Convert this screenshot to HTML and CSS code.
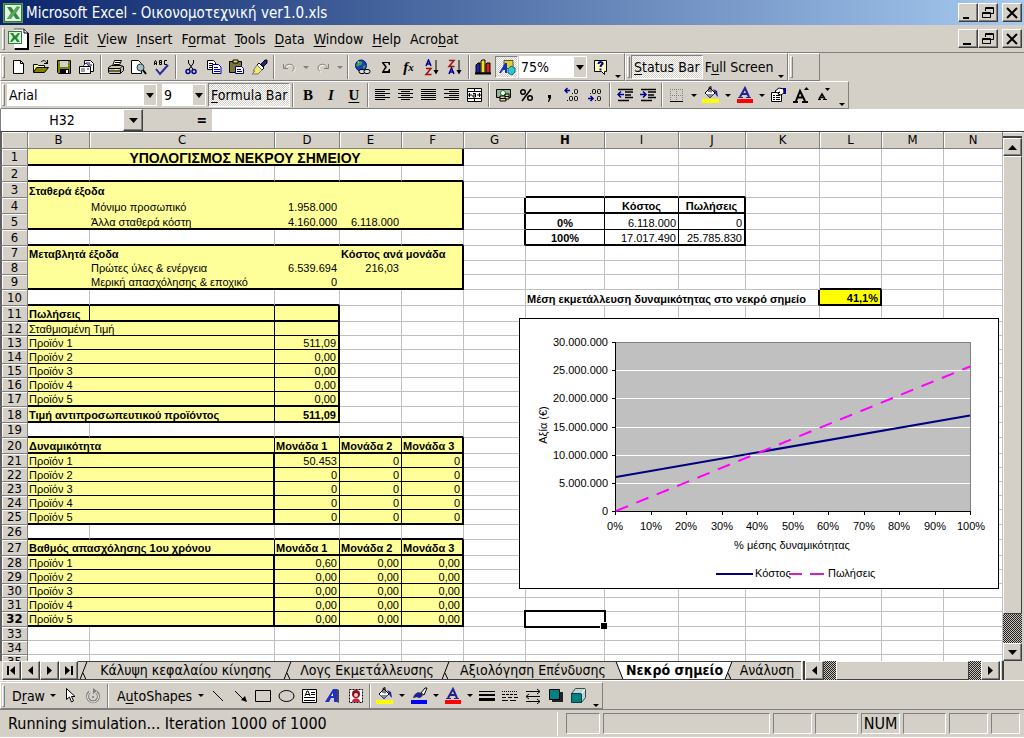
FILE: index.html
```html
<!DOCTYPE html>
<html lang="el">
<head>
<meta charset="utf-8">
<title>Microsoft Excel - Οικονομοτεχνική ver1.0.xls</title>
<link rel="stylesheet" href="styles.css">
</head>
<body>
<header class="titlebar">
  <svg class="app-icon" width="20" height="20" viewBox="0 0 20 20"><rect width="20" height="20" fill="#5a9a5a"/><rect x="1" y="1" width="18" height="18" fill="#2f7d3a"/><rect x="2" y="2" width="16" height="16" fill="#e4f2e0"/><path d="M4 4h4l3 4 3-4h3l-4 6 4 6h-4l-3-4-3 4H4l4-6z" fill="#2f8a3c"/><path d="M14 3l3 1-9 12H4z" fill="#56a860"/></svg>
  <h1>Microsoft Excel - Οικονομοτεχνική ver1.0.xls</h1>
  <div class="winbtns">
    <button aria-label="Minimize"><svg width="14" height="14"><path d="M2 11h6v2H2z"/></svg></button>
    <button aria-label="Restore"><svg width="14" height="14" fill="none" stroke="#000"><path d="M4.500 5V1.500h8v6H10M4 2.500h9M1.500 6.500h8v5h-8zM1 7.500h9"/></svg></button>
    <button class="close" aria-label="Close"><svg width="14" height="14"><path d="M2 2l10 10M12 2L2 12" stroke="#000" stroke-width="2"/></svg></button>
  </div>
</header>

<nav class="menubar">
  <span class="grip"></span>
  <svg class="doc-icon" width="22" height="22" viewBox="0 0 22 22"><path d="M7 1h10l4 4v16H7z" fill="#fff"/><path d="M7 1h10l4 4v16H7" fill="none" stroke="#555"/><path d="M17 1v4h4" fill="none" stroke="#000"/><path d="M21 5v16H8" fill="none" stroke="#000" stroke-width="2"/><rect x="1" y="3" width="14" height="13" fill="#2f7d3a"/><rect x="2" y="4" width="12" height="11" fill="#dff0da"/><path d="M3 5h3l2 3 3-3h2l-3 5 3 4h-3l-2-3-3 3H3l3-5z" fill="#1f8a34"/></svg>
  <button><u>F</u>ile</button><button><u>E</u>dit</button><button><u>V</u>iew</button><button><u>I</u>nsert</button><button>F<u>o</u>rmat</button><button><u>T</u>ools</button><button><u>D</u>ata</button><button><u>W</u>indow</button><button><u>H</u>elp</button><button>Acro<u>b</u>at</button>
  <div class="winbtns">
    <button aria-label="Minimize workbook"><svg width="14" height="14"><path d="M2 11h8v2H2z"/></svg></button>
    <button aria-label="Restore workbook"><svg width="14" height="14" fill="none" stroke="#000"><path d="M4.500 5V1.500h8v6H10M4 2.500h9M1.500 6.500h8v5h-8zM1 7.500h9"/></svg></button>
    <button class="close" aria-label="Close workbook"><svg width="14" height="14"><path d="M2 2l10 10M12 2L2 12" stroke="#000" stroke-width="2"/></svg></button>
  </div>
</nav>

<div class="dock">
  <div class="toolbar" role="toolbar" aria-label="Standard">
    <span class="grip"></span>
    <button class="ic" aria-label="New"><svg width="16" height="16"><path d="M3.500 1.500h7l3 3v10h-10z" fill="#fff" stroke="#000"/><path d="M10.500 1.500v3h3" fill="none" stroke="#000"/></svg></button>
    <button class="ic" aria-label="Open"><svg width="18" height="16"><path d="M1.500 13.500v-8h4l1 1h6v2" fill="#ffff80" stroke="#000"/><path d="M1.500 13.500l3-5h12l-4 5z" fill="#808000" stroke="#000"/><path d="M9 3c2-2 4-2 6 1M15.500 1v4M12 4.500h4" fill="none" stroke="#000"/></svg></button>
    <button class="ic" aria-label="Save"><svg width="16" height="16"><path d="M1.500 1.500h13v13h-12l-1-1z" fill="#808000" stroke="#000"/><path d="M4 2h8v6H4z" fill="#d4d0c8"/><path d="M4 10h9v4H4z"/><path d="M10 11h2v3h-2z" fill="#fff"/></svg></button>
    <button class="ic" aria-label="E-mail"><svg width="17" height="16"><path d="M6.500 6V1.500h6l3 3v8h-3" fill="#fff" stroke="#000"/><path d="M8 4h4M8 6h6" stroke="#000080"/><path d="M4 8l4-4 4 4z" fill="#eee" stroke="#444"/><path d="M1.500 7.500h11v7h-11z" fill="#fff" stroke="#000"/><path d="M3 10h4M3 12h4M9 10h2" stroke="#444"/></svg></button>
    <i class="sep"></i>
    <button class="ic" aria-label="Print"><svg width="17" height="16"><path d="M5.500 7l2-5.500h7L12 7" fill="#fff" stroke="#000"/><path d="M8 3.500h5M7 5.500h5" stroke="#000"/><path d="M1.500 8.500l3-2h10l2 1v4l-3 3h-11l-1-1z" fill="#c8c8a8" stroke="#000"/><path d="M1 9.500h12M2 12h11M13.500 9l2-2M13.500 14V9.500" stroke="#000" fill="none"/><path d="M8 10h3v1H8z" fill="#ff0"/></svg></button>
    <button class="ic" aria-label="Print Preview"><svg width="17" height="16"><path d="M1.500 1.500h7l3 3v10h-10z" fill="#fff" stroke="#000"/><circle cx="10.500" cy="8.500" r="3.500" fill="#9cc4c8" stroke="#333"/><path d="M13 11l3 4" stroke="#000" stroke-width="2"/></svg></button>
    <button class="ic" aria-label="Spelling"><svg width="17" height="17"><path d="M1.500 6V3l1-1.500 1 1.500v3M1.500 4.500h2M6.500 1.500v4h2v-4zM6.500 3.500h2M14 1.500h-2.500v4H14" fill="none" stroke="#000"/><path d="M3 10l4 5 8-9" fill="none" stroke="#2a2a9c" stroke-width="2"/></svg></button>
    <i class="sep"></i>
    <button class="ic" aria-label="Cut"><svg width="16" height="16" fill="none"><path d="M5.500 1v3l5 7M10.500 1v3l-5 7" stroke="#000"/><circle cx="5" cy="12.500" r="2" stroke="#000090" stroke-width="1.500"/><circle cx="11" cy="12.500" r="2" stroke="#000090" stroke-width="1.500"/></svg></button>
    <button class="ic" aria-label="Copy"><svg width="16" height="16"><path d="M1.500 1.500h6l2 2v7h-8z" fill="#fff" stroke="#000"/><path d="M3 4.500h4M3 6.500h5M3 8.500h3" stroke="#000"/><path d="M6.500 5.500h6l2.500 2.500v6.500H6.500z" fill="#fff" stroke="#000090"/><path d="M8 8.500h4M8 10.500h6M8 12.500h6" stroke="#000090"/></svg></button>
    <button class="ic" aria-label="Paste"><svg width="17" height="16"><path d="M1.500 2.500h12v11h-12z" fill="#77773c" stroke="#000"/><path d="M5 1h5v3H5z" fill="#e8e060" stroke="#000"/><path d="M7.500 7.500h6l2 2v5h-8z" fill="#fff" stroke="#000090"/><path d="M9 10.500h4M9 12.500h5" stroke="#000090"/></svg></button>
    <button class="ic" aria-label="Format Painter"><svg width="18" height="16"><path d="M10 5l4-4 2 0 0 3-4 4z" fill="#22228c" stroke="#000"/><path d="M8 4l5 5-2 2-5-5z" fill="#fff" stroke="#000"/><path d="M6 6l5 5-4 4H1l3-3H2z" fill="#f0e868" stroke="#777"/></svg></button>
    <i class="sep"></i>
    <button class="ic" aria-label="Undo"><svg width="16" height="16" fill="none"><path d="M4 9c0-5 9-5 9 0 0 2-1 3-2 3" stroke="#fff" transform="translate(1 1)"/><path d="M4 9c0-5 9-5 9 0 0 2-1 3-2 3M2.500 5v4.500H7" stroke="#808080"/></svg></button>
    <button class="dd off" aria-label="Undo list"></button>
    <button class="ic" aria-label="Redo"><svg width="16" height="16" fill="none"><path d="M12 9C12 4 3 4 3 9c0 2 1 3 2 3" stroke="#fff" transform="translate(1 1)"/><path d="M12 9C12 4 3 4 3 9c0 2 1 3 2 3M13.500 5v4.500H9" stroke="#808080"/></svg></button>
    <button class="dd off" aria-label="Redo list"></button>
    <i class="sep"></i>
    <button class="ic" aria-label="Insert Hyperlink"><svg width="17" height="17"><circle cx="7" cy="6.500" r="5.500" fill="#1c3cc0" stroke="#001060"/><path d="M4 3c3-2 5 0 4 2S4 6 4 8L2 6zM9 7l3-1-1 3-2 1z" fill="#2fa84a"/><path d="M3 3l2-1v2z" fill="#9fe0ff"/><rect x="5" y="10.500" width="6" height="4" rx="2" fill="#ddd" stroke="#000"/><rect x="10" y="10.500" width="6" height="4" rx="2" fill="#ddd" stroke="#000"/></svg></button>
    <button class="ic" aria-label="AutoSum"><svg width="16" height="16"><path d="M4 3h8v3h-1l-1-2H6l3 4-3 4h4l1-2h1v4H4v-1l3-5-3-4z"/></svg></button>
    <button class="ic fx" aria-label="Paste Function"><i>f</i><small>x</small></button>
    <button class="ic" aria-label="Sort Ascending"><svg width="16" height="17" fill="none"><path d="M2 7l2.500-6L7 7M3 5h3" stroke="#000090" stroke-width="1.500"/><path d="M2 9.500h5L2 15.500h5.500" stroke="#a01010" stroke-width="1.500"/><path d="M12 1v12" stroke="#000"/><path d="M9.500 11h5L12 15.500z" fill="#000"/></svg></button>
    <button class="ic" aria-label="Sort Descending"><svg width="16" height="17" fill="none"><path d="M2 15l2.500-6L7 15M3 13h3" stroke="#000090" stroke-width="1.500"/><path d="M2 1.500h5L2 7.500h5.500" stroke="#a01010" stroke-width="1.500"/><path d="M12 1v12" stroke="#000"/><path d="M9.500 11h5L12 15.500z" fill="#000"/></svg></button>
    <i class="sep"></i>
    <button class="ic" aria-label="Chart Wizard"><svg width="17" height="16"><path d="M1 6l2-2h2v10H1z" fill="#2020b0" stroke="#000"/><path d="M6 2l1-1h3v13H6z" fill="#f4e020" stroke="#000"/><path d="M11 5l1-1h3v10h-4z" fill="#e02020" stroke="#000"/><path d="M0 14.500h16" stroke="#000" stroke-width="2"/></svg></button>
    <button class="ic on" aria-label="Drawing"><svg width="18" height="18"><path d="M6 2.500h9v8H6z" fill="#e8d020" stroke="#555"/><path d="M1 15L7 5h2v10H7v-3H5l-2 3z" fill="#1030c0"/><path d="M10 11l3-3 4 2v4l-3 3-4-2z" fill="#30c8d0" stroke="#0a7080"/></svg></button>
    <label class="combo zoom"><select aria-label="Zoom"><option>75%</option></select><span></span></label>
    <button class="ic" aria-label="Help"><svg width="16" height="17"><path d="M1.500 1.500h12v11h-2v3l-3-3h-7z" fill="#ffffb0" stroke="#000"/><path d="M5.500 5c0-3 5-2 4 0-1 1-2 1-2 3M7.500 9.500v2" fill="none" stroke="#0000a0" stroke-width="2"/></svg></button>
    <button class="dd more" aria-label="More Buttons"></button>
  </div>
  <div class="toolbar" role="toolbar" aria-label="View">
    <span class="grip"></span>
    <button class="tx on"><u>S</u>tatus Bar</button><button class="tx">F<u>u</u>ll Screen</button>
    <button class="dd more" aria-label="More view buttons"></button>
  </div>
  <div class="toolbar stub"><span class="grip"></span></div>
</div>

<div class="dock">
  <div class="toolbar" role="toolbar" aria-label="Formatting">
    <span class="grip"></span>
    <label class="combo font"><select aria-label="Font"><option>Arial</option></select><span></span></label>
    <label class="combo size"><select aria-label="Font Size"><option>9</option></select><span></span></label>
    <button class="tx on"><u>F</u>ormula Bar</button>
    <i class="sep"></i>
    <button class="ic ser" aria-label="Bold"><b>B</b></button>
    <button class="ic ser" aria-label="Italic"><b><i>I</i></b></button>
    <button class="ic ser" aria-label="Underline"><b><u>U</u></b></button>
    <i class="sep"></i>
    <button class="ic" aria-label="Align Left"><svg width="15" height="14" stroke="#000"><path d="M0 1.500h15M0 3.500h10M0 5.500h15M0 7.500h10M0 9.500h15M0 11.500h10"/></svg></button>
    <button class="ic" aria-label="Center"><svg width="15" height="14" stroke="#000"><path d="M0 1.500h15M3 3.500h9M0 5.500h15M3 7.500h9M0 9.500h15M3 11.500h9"/></svg></button>
    <button class="ic" aria-label="Justify"><svg width="15" height="14" stroke="#000"><path d="M0 1.500h15M0 3.500h15M0 5.500h15M0 7.500h15M0 9.500h15M0 11.500h15"/></svg></button>
    <button class="ic" aria-label="Align Right"><svg width="15" height="14" stroke="#000"><path d="M0 1.500h15M5 3.500h10M0 5.500h15M5 7.500h10M0 9.500h15M5 11.500h10"/></svg></button>
    <button class="ic" aria-label="Merge and Center"><svg width="17" height="16"><path d="M1.500 1.500h14v13h-14zM1 4.500h15M1 11.500h15M8.500 1v3M8.500 12v3" fill="#fff" stroke="#000"/><path d="M2 8h4M3.500 6v4M11 8h4M13.500 6v4M7 6.500h2.500v3.500H7V8h2" stroke="#000" fill="none"/></svg></button>
    <i class="sep"></i>
    <button class="ic" aria-label="Currency Style"><svg width="17" height="16"><path d="M1.500 2.500h14v8h-14z" fill="#90b890" stroke="#000"/><circle cx="8" cy="6" r="2.500" fill="#fff" stroke="#274"/><path d="M5 9h6v5H5z" fill="#e0d890" stroke="#000"/><path d="M10 7h4v5h-4z" fill="#e0d890" stroke="#000"/><path d="M5 11.500h6M10 9.500h4" stroke="#000"/></svg></button>
    <button class="ic" aria-label="Percent Style"><svg width="15" height="14" fill="none" stroke="#000" stroke-width="1.500"><circle cx="4" cy="4" r="2.300"/><circle cx="11" cy="10" r="2.300"/><path d="M12 1L3 13"/></svg></button>
    <button class="ic" aria-label="Comma Style"><svg width="10" height="16"><path d="M3 8h3v3l-2 4H3l1-4H3z"/></svg></button>
    <button class="ic dec" aria-label="Increase Decimal"><svg width="17" height="16"><path d="M1 3.500h5M3.500 1L1 3.500 3.500 6" stroke="#000090" fill="none" stroke-width="1.500"/><path d="M8 6h1v1H8zM3 13h1v1H3z"/><g fill="none" stroke="#000"><rect x="10.500" y="2.500" width="3" height="4" rx="1"/><rect x="5.500" y="9.500" width="3" height="4" rx="1"/><rect x="10.500" y="9.500" width="3" height="4" rx="1"/></g></svg></button>
    <button class="ic dec" aria-label="Decrease Decimal"><svg width="17" height="16"><path d="M1 11.500h5M3.500 9L6 11.500 3.500 14" stroke="#000090" fill="none" stroke-width="1.500"/><path d="M8 13h1v1H8zM3 6h1v1H3z"/><g fill="none" stroke="#000"><rect x="10.500" y="2.500" width="3" height="4" rx="1"/><rect x="5.500" y="2.500" width="3" height="4" rx="1"/><rect x="10.500" y="9.500" width="3" height="4" rx="1"/></g></svg></button>
    <i class="sep"></i>
    <button class="ic" aria-label="Decrease Indent"><svg width="16" height="15"><path d="M1 1.500h15M8 4h8M8 7h6M8 9.500h8M1 12.500h11" stroke="#000" stroke-width="1.500"/><path d="M1 6.500h6M4 3.500l-3 3 3 3" stroke="#000090" fill="none" stroke-width="1.500"/></svg></button>
    <button class="ic" aria-label="Increase Indent"><svg width="16" height="15"><path d="M1 1.500h15M8 4h8M8 7h6M8 9.500h8M1 12.500h11" stroke="#000" stroke-width="1.500"/><path d="M0 6.500h6M3 3.500l3 3-3 3" stroke="#000090" fill="none" stroke-width="1.500"/></svg></button>
    <i class="sep"></i>
    <button class="ic" aria-label="Borders"><svg width="15" height="15"><path d="M1 1.500h13M1 7.500h13M1.500 1v12M7.500 1v12M13.500 1v12" stroke="#808080" stroke-dasharray="1 1"/><path d="M1 13.500h13" stroke="#000"/></svg></button>
    <button class="dd" aria-label="Borders list"></button>
    <button class="ic" aria-label="Fill Color"><svg width="18" height="18"><path d="M3 7l5-5 5 5-5 5z" fill="#fff" stroke="#000"/><path d="M7 6V1.500l2-1v6" fill="none" stroke="#000"/><path d="M11 3l4 2 1 6-2-2-1-2z" fill="#22228c"/><path d="M4 8h8l-4 4z" fill="#88a"/><path d="M0 13h17v4H0z" fill="#ff0"/></svg></button>
    <button class="dd" aria-label="Fill colors"></button>
    <button class="ic" aria-label="Font Color"><svg width="18" height="18"><path d="M4 11L9 2l4 9M6 8h5" fill="none" stroke="#22228c" stroke-width="2"/><path d="M2 11.500h5M10 11.500h5" stroke="#22228c"/><path d="M1 13h16v4H1z" fill="#f00"/></svg></button>
    <button class="dd" aria-label="Font colors"></button>
    <button class="ic" aria-label="Format Cells"><svg width="17" height="16"><path d="M1.500 5.500h10v9h-10z" fill="#fff" stroke="#000"/><path d="M3 8.500h2M6 8.500h4M3 10.500h2M6 10.500h4M3 12.500h2M6 12.500h4" stroke="#000"/><path d="M5 4l4-3 5 1v4l-3 2-3-1 2-2-3 1z" fill="#fff" stroke="#000"/><path d="M13 1h3v6h-2z" fill="#000090"/></svg></button>
    <button class="ic" aria-label="Increase Font Size"><svg width="17" height="17"><path d="M3 14L7 4l5 10M5 10.500h6" fill="none" stroke="#000" stroke-width="2"/><path d="M0 15h5M9 15h6" stroke="#000" stroke-width="2"/><path d="M11 3h5l-2.500-3z"/></svg></button>
    <button class="ic" aria-label="Decrease Font Size"><svg width="17" height="17"><path d="M3 12l3-5 3 5M4 10.500h4" fill="none" stroke="#000" stroke-width="1.500"/><path d="M2 12.500h3M7 12.500h4" stroke="#000"/><path d="M9 1h5l-2.500 3z"/></svg></button>
    <button class="dd more" aria-label="More Buttons"></button>
  </div>
</div>

<div class="formulabar">
  <input class="namebox" aria-label="Name Box" value="H32">
  <button class="raised" aria-label="Names"><svg width="9" height="5"><path d="M0 0h9L4.500 5z"/></svg></button>
  <button class="eq" aria-label="Edit Formula">=</button>
  <input class="formula" aria-label="Formula">
</div>

<main class="workbook">
 <div class="sheet">
  <table>
   <colgroup><col class="w28"><col class="w62"><col class="w185"><col class="w65"><col class="w62"><col class="w62"><col class="w62"><col class="w79"><col class="w74"><col class="w67"><col class="w74"><col class="w62"><col class="w62"><col></colgroup>
   <thead><tr><th></th><th>B</th><th>C</th><th>D</th><th>E</th><th>F</th><th>G</th><th class="cur">H</th><th>I</th><th>J</th><th>K</th><th>L</th><th>M</th><th>N</th></tr></thead>
   <tbody>
    <tr class="h17"><th>1</th><td colspan="5" class="title">ΥΠΟΛΟΓΙΣΜΟΣ ΝΕΚΡΟΥ ΣΗΜΕΙΟΥ</td><td><td><td><td><td><td><td><td></tr>
    <tr class="h16 pre5"><th>2</th><td><td><td><td><td><td><td><td><td><td><td><td><td></tr>
    <tr class="h16 box sum-top"><th>3</th><td><b>Σταθερά έξοδα</b><td><td><td><td><td><td><td><td><td><td><td><td></tr>
    <tr class="h16 box sum sum-end"><th>4</th><td><td>Μόνιμο προσωπικό<td class="n">1.958.000<td><td><td><td><td class="c"><b>Κόστος</b><td class="c"><b>Πωλήσεις</b><td><td><td><td></tr>
    <tr class="h16 box end sum"><th>5</th><td><td>Άλλα σταθερά κόστη<td class="n">4.160.000<td class="n">6.118.000<td><td><td class="c"><b>0%</b><td class="n">6.118.000<td class="n">0<td><td><td><td></tr>
    <tr class="h16 pre5 sum sum-end"><th>6</th><td><td><td><td><td><td><td class="c"><b>100%</b><td class="n">17.017.490<td class="n">25.785.830<td><td><td><td></tr>
    <tr class="h15 box"><th>7</th><td><b>Μεταβλητά έξοδα</b><td><td><td><b>Κόστος ανά μονάδα</b><td><td><td><td><td><td><td><td><td></tr>
    <tr class="h14 box"><th>8</th><td><td>Πρώτες ύλες &amp; ενέργεια<td class="n">6.539.694<td class="n">216,03<td><td><td><td><td><td><td><td><td></tr>
    <tr class="h15 box end"><th>9</th><td><td>Μερική απασχόλησης &amp; εποχικό<td class="n">0<td><td><td><td><td><td><td><td class="kb"><td><td></tr>
    <tr class="h16 pre3"><th>10</th><td><td><td><td><td><td><td colspan="4" class="kr"><b>Μέση εκμετάλλευση δυναμικότητας στο νεκρό σημείο</b><td class="n result"><b>41,1%</b><td><td></tr>
    <tr class="h16 g3 split thick"><th>11</th><td><b>Πωλήσεις</b><td><td><td><td><td><td><td><td><td><td><td><td></tr>
    <tr class="h14 g3"><th>12</th><td>Σταθμισμένη Τιμή<td><td><td><td><td><td><td><td><td><td><td><td></tr>
    <tr class="h14 g3"><th>13</th><td>Προϊόν 1<td><td class="n">511,09<td><td><td><td><td><td><td><td><td><td></tr>
    <tr class="h14 g3"><th>14</th><td>Προϊόν 2<td><td class="n">0,00<td><td><td><td><td><td><td><td><td><td></tr>
    <tr class="h14 g3"><th>15</th><td>Προϊόν 3<td><td class="n">0,00<td><td><td><td><td><td><td><td><td><td></tr>
    <tr class="h14 g3"><th>16</th><td>Προϊόν 4<td><td class="n">0,00<td><td><td><td><td><td><td><td><td><td></tr>
    <tr class="h15 g3 thick"><th>17</th><td>Προϊόν 5<td><td class="n">0,00<td><td><td><td><td><td><td><td><td><td></tr>
    <tr class="h16 g3 thick"><th>18</th><td><b>Τιμή αντιπροσωπευτικού προϊόντος</b><td><td class="n"><b>511,09</b><td><td><td><td><td><td><td><td><td><td></tr>
    <tr class="h15 pre5"><th>19</th><td><td><td><td><td><td><td><td><td><td><td><td><td></tr>
    <tr class="h16 g5 thick"><th>20</th><td><b>Δυναμικότητα</b><td><td><b>Μονάδα 1</b><td><b>Μονάδα 2</b><td><b>Μονάδα 3</b><td><td><td><td><td><td><td><td></tr>
    <tr class="h14 g5 body"><th>21</th><td>Προϊόν 1<td><td class="n">50.453<td class="n">0<td class="n">0<td><td><td><td><td><td><td><td></tr>
    <tr class="h14 g5 body"><th>22</th><td>Προϊόν 2<td><td class="n">0<td class="n">0<td class="n">0<td><td><td><td><td><td><td><td></tr>
    <tr class="h14 g5 body"><th>23</th><td>Προϊόν 3<td><td class="n">0<td class="n">0<td class="n">0<td><td><td><td><td><td><td><td></tr>
    <tr class="h14 g5 body"><th>24</th><td>Προϊόν 4<td><td class="n">0<td class="n">0<td class="n">0<td><td><td><td><td><td><td><td></tr>
    <tr class="h15 g5 body thick"><th>25</th><td>Προϊόν 5<td><td class="n">0<td class="n">0<td class="n">0<td><td><td><td><td><td><td><td></tr>
    <tr class="h15 pre5"><th>26</th><td><td><td><td><td><td><td><td><td><td><td><td><td></tr>
    <tr class="h16 g5 thick"><th>27</th><td><b>Βαθμός απασχόλησης 1ου χρόνου</b><td><td><b>Μονάδα 1</b><td><b>Μονάδα 2</b><td><b>Μονάδα 3</b><td><td><td><td><td><td><td><td></tr>
    <tr class="h14 g5 body"><th>28</th><td>Προϊόν 1<td><td class="n">0,60<td class="n">0,00<td class="n">0,00<td><td><td><td><td><td><td><td></tr>
    <tr class="h14 g5 body"><th>29</th><td>Προϊόν 2<td><td class="n">0,00<td class="n">0,00<td class="n">0,00<td><td><td><td><td><td><td><td></tr>
    <tr class="h14 g5 body"><th>30</th><td>Προϊόν 3<td><td class="n">0,00<td class="n">0,00<td class="n">0,00<td><td><td><td><td><td><td><td></tr>
    <tr class="h14 g5 body"><th>31</th><td>Προϊόν 4<td><td class="n">0,00<td class="n">0,00<td class="n">0,00<td><td><td><td><td><td><td><td></tr>
    <tr class="h15 g5 body thick"><th class="cur">32</th><td>Προϊόν 5<td><td class="n">0,00<td class="n">0,00<td class="n">0,00<td><td class="active"><td><td><td><td><td><td></tr>
    <tr class="h14"><th>33</th><td><td><td><td><td><td><td><td><td><td><td><td><td></tr>
    <tr class="h14"><th>34</th><td><td><td><td><td><td><td><td><td><td><td><td><td></tr>
    <tr class="h14"><th>35</th><td><td><td><td><td><td><td><td><td><td><td><td><td></tr>
   </tbody>
  </table>
  <svg class="chart" width="480" height="271" viewBox="0 0 480 271" role="img" aria-label="Κόστος, Πωλήσεις">
   <rect x=".5" y=".5" width="479" height="270" fill="#fff" stroke="#000"/>
   <path d="M96 24h356v169H96z" fill="#c0c0c0"/>
   <path d="M96 52.500h355M96 80.500h355M96 109.500h355M96 137.500h355M96 165.500h355" stroke="#fff"/>
   <path d="M96 24.500h355.500V193" fill="none" stroke="#808080"/>
   <path d="M96.500 24v173M93 193.500h359M93 24.500h3M93 52.500h3M93 80.500h3M93 109.500h3M93 137.500h3M93 165.500h3M132.500 193v4M167.500 193v4M203.500 193v4M238.500 193v4M274.500 193v4M309.500 193v4M345.500 193v4M380.500 193v4M416.500 193v4M451.500 193v4" stroke="#000"/>
   <path d="M97 159L451 97.500" stroke="#000080" stroke-width="2"/>
   <path d="M97 193L451 48.500" stroke="#ff00ff" stroke-width="2" stroke-dasharray="13 9"/>
   <g class="ylab"><text x="89" y="28">30.000.000</text><text x="89" y="56">25.000.000</text><text x="89" y="84">20.000.000</text><text x="89" y="113">15.000.000</text><text x="89" y="141">10.000.000</text><text x="89" y="169">5.000.000</text><text x="89" y="197">0</text></g>
   <g class="xlab"><text x="96" y="212">0%</text><text x="132" y="212">10%</text><text x="167" y="212">20%</text><text x="203" y="212">30%</text><text x="238" y="212">40%</text><text x="274" y="212">50%</text><text x="309" y="212">60%</text><text x="345" y="212">70%</text><text x="380" y="212">80%</text><text x="416" y="212">90%</text><text x="452" y="212">100%</text><text x="273" y="231">% μέσης δυναμικότητας</text><text transform="translate(28 107) rotate(-90)">Αξία (€)</text></g>
   <path d="M197 256h37" stroke="#000080" stroke-width="2"/><text x="236" y="259">Κόστος</text>
   <path d="M270 256h13M291 256h14" stroke="#d020d0" stroke-width="2"/><text x="309" y="259">Πωλήσεις</text>
  </svg>
 </div>
 <div class="vscroll">
  <i class="splitbox"></i>
  <button class="raised" aria-label="Scroll up"><svg width="9" height="5"><path d="M0 5h9L4.500 0z"/></svg></button>
  <i class="thumb"></i><i class="track"></i>
  <button class="raised" aria-label="Scroll down"><svg width="9" height="5"><path d="M0 0h9L4.500 5z"/></svg></button>
 </div>
</main>

<div class="tabbar">
  <button class="raised" aria-label="First sheet"><svg width="9" height="9"><path d="M0 0h2v9H0zM8 0v9L3 4.500z"/></svg></button>
  <button class="raised" aria-label="Previous sheet"><svg width="9" height="9"><path d="M7 0v9L2 4.500z"/></svg></button>
  <button class="raised" aria-label="Next sheet"><svg width="9" height="9"><path d="M2 0v9l5-4.500z"/></svg></button>
  <button class="raised" aria-label="Last sheet"><svg width="9" height="9"><path d="M7 0h2v9H7zM1 0v9l5-4.500z"/></svg></button>
  <div class="tabs">
    <svg class="slash" width="12" height="19"><path d="M2 18.500L9 .500M5 12l3 6.500" fill="none" stroke="#000"/></svg>
    <button class="t1">Κάλυψη κεφαλαίου κίνησης</button>
    <svg class="slash" width="12" height="19"><path d="M2 18.500L9 .500M5 12l3 6.500" fill="none" stroke="#000"/></svg>
    <button class="t2">Λογς Εκμετάλλευσης</button>
    <svg class="slash" width="12" height="19"><path d="M2 18.500L9 .500M5 12l3 6.500" fill="none" stroke="#000"/></svg>
    <button class="t3">Αξιολόγηση Επένδυσης</button>
    <svg class="slash" width="12" height="19"><path d="M2 0h10v19H9z" fill="#fff"/><path d="M2 .500L9 18.500" stroke="#000"/></svg>
    <button class="t4 act" aria-current="true">Νεκρό σημείο</button>
    <svg class="slash" width="12" height="19"><path d="M0 0h9L4 14l-1 5H0z" fill="#fff"/><path d="M2 18.500L9 .500M5 12l3 6.500" fill="none" stroke="#000"/></svg>
    <button class="t5">Ανάλυση</button>
  </div>
  <div class="hscroll">
    <i class="splitbox"></i>
    <button class="raised" aria-label="Scroll left"><svg width="9" height="9"><path d="M7 0v9L2 4.500z"/></svg></button>
    <i class="track"></i><i class="thumb"></i><i class="track"></i>
    <button class="raised" aria-label="Scroll right"><svg width="9" height="9"><path d="M2 0v9l5-4.500z"/></svg></button>
    <i class="splitbox"></i>
  </div>
</div>

<div class="dock draw">
  <div class="toolbar" role="toolbar" aria-label="Drawing">
    <span class="grip"></span>
    <button class="tx menu">D<u>r</u>aw</button><button class="dd" aria-label="Draw menu"></button>
    <button class="ic" aria-label="Select Objects"><svg width="14" height="17"><path d="M3.500 1.500v11l3-2.500 2 5 2-1-2-4.500h3.500z" fill="#fff" stroke="#000"/></svg></button>
    <button class="ic" aria-label="Free Rotate"><svg width="16" height="16" fill="none"><path d="M4.500 4a5.500 5.500 0 1 0 7 0" stroke="#808080" stroke-width="3"/><path d="M5 4a5.500 5.500 0 1 0 6 0" stroke="#eee"/><path d="M8 0v6l4-3z" fill="#808080"/><circle cx="8" cy="9" r="1" fill="#777"/></svg></button>
    <i class="sep"></i>
    <button class="tx menu">A<u>u</u>toShapes</button><button class="dd" aria-label="AutoShapes menu"></button>
    <button class="ic" aria-label="Line"><svg width="16" height="16"><path d="M3 3l10 10" stroke="#000"/></svg></button>
    <button class="ic" aria-label="Arrow"><svg width="16" height="16"><path d="M2 3l9 9" stroke="#000"/><path d="M14 14l-6-2 4-4z"/></svg></button>
    <button class="ic" aria-label="Rectangle"><svg width="17" height="14"><path d="M.500 1.500h15v11H.500z" fill="none" stroke="#000"/></svg></button>
    <button class="ic" aria-label="Oval"><svg width="17" height="14"><ellipse cx="8.500" cy="7" rx="7.500" ry="5.500" fill="none" stroke="#000"/></svg></button>
    <button class="ic" aria-label="Text Box"><svg width="16" height="16"><path d="M.500 1.500h14v13H.500z" fill="#fff" stroke="#000"/><path d="M3 8l2-5h1l2 5M4 6.500h3M9 4.500h4M9 6.500h4M2 9.500h11M2 12.500h11" stroke="#000" fill="none"/></svg></button>
    <button class="ic" aria-label="Insert WordArt"><svg width="17" height="16"><path d="M1 14L9 1h4v13h-3v-4H7l-2 4z" fill="#2030c0"/><path d="M13 1l2 1v13l-2-1z" fill="#445"/><path d="M9 5v3H7z" fill="#fff"/></svg></button>
    <button class="ic" aria-label="Insert Clip Art"><svg width="16" height="16"><path d="M1.500 1.500h13v13h-13z" fill="#fff" stroke="#000" stroke-dasharray="2 1"/><circle cx="8" cy="6" r="4" fill="#8a1020"/><circle cx="8" cy="7" r="2" fill="#fcc"/><path d="M4 14c0-5 8-5 8 0z" fill="#d02040"/></svg></button>
    <i class="sep"></i>
    <button class="ic" aria-label="Fill Color"><svg width="18" height="18"><path d="M3 7l5-5 5 5-5 5z" fill="#fff" stroke="#000"/><path d="M7 6V1.500l2-1v6" fill="none" stroke="#000"/><path d="M11 3l4 2 1 6-2-2-1-2z" fill="#22228c"/><path d="M4 8h8l-4 4z" fill="#88a"/><path d="M0 13h17v4H0z" fill="#ff0"/></svg></button>
    <button class="dd" aria-label="Fill colors"></button>
    <button class="ic" aria-label="Line Color"><svg width="18" height="18"><path d="M11 6l4-5h2l-3 7z" fill="#fff" stroke="#000"/><path d="M3 11c1-4 5-7 8-5l2 2c-2 3-4 4-6 2-1 0-2 1-4 1z" fill="#22228c"/><path d="M1 13h16v4H1z" fill="#00f"/></svg></button>
    <button class="dd" aria-label="Line colors"></button>
    <button class="ic" aria-label="Font Color"><svg width="18" height="18"><path d="M4 11L9 2l4 9M6 8h5" fill="none" stroke="#22228c" stroke-width="2"/><path d="M2 11.500h5M10 11.500h5" stroke="#22228c"/><path d="M1 13h16v4H1z" fill="#f00"/></svg></button>
    <button class="dd" aria-label="Font colors"></button>
    <button class="ic" aria-label="Line Style"><svg width="16" height="14"><path d="M0 2.500h16" stroke="#000"/><path d="M0 6h16" stroke="#000" stroke-width="2"/><path d="M0 10.500h16" stroke="#000" stroke-width="3"/></svg></button>
    <button class="ic" aria-label="Dash Style"><svg width="16" height="14" stroke="#000"><path d="M0 2.500h16" stroke-dasharray="1 1"/><path d="M0 5.500h16" stroke-dasharray="3 1"/><path d="M0 8.500h16" stroke-dasharray="4 2"/><path d="M0 11.500h16" stroke-dasharray="6 2"/></svg></button>
    <button class="ic" aria-label="Arrow Style"><svg width="16" height="16" fill="none" stroke="#000"><path d="M1 3.500h14M12 1l3 2.500L12 6M1 8.500h14M4 6L1 8.500 4 11M1 13.500h14M12 11l3 2.500-3 2.500"/></svg></button>
    <button class="ic" aria-label="Shadow"><svg width="15" height="15"><path d="M4 4h11v10H4z" fill="#222"/><path d="M1.500 1.500h10v10h-10z" fill="#008080" stroke="#000"/></svg></button>
    <button class="ic" aria-label="3-D"><svg width="17" height="17"><path d="M1.500 6.500l4-5h10v9l-4 5z" fill="#b8d8d8" stroke="#444"/><path d="M1.500 6.500h10v9h-10z" fill="#008080" stroke="#044"/><path d="M11.500 6.500l4-5" stroke="#fff"/></svg></button>
    <button class="dd more" aria-label="More Buttons"></button>
  </div>
</div>

<footer class="status">
  <p>Running simulation... Iteration 1000 of 1000</p>
  <span class="pane p1"></span><span class="pane p2"></span><span class="pane p3"></span><span class="pane p4"></span><span class="pane p3 num">NUM</span><span class="pane p4"></span><span class="pane p3"></span><span class="pane p5"></span>
</footer>
</body>
</html>
```
FILE: styles.css
```css
* { box-sizing: border-box; }
html, body { height: 100%; }
body {
  margin: 0;
  display: flex;
  flex-direction: column;
  overflow: hidden;
  background: #d4d0c8;
  color: #000;
  font: 14px/18px "DejaVu Sans Condensed", "Noto Sans", sans-serif;
}
button, input, select { font: inherit; color: inherit; border: 0; padding: 0; margin: 0; background: none; border-radius: 0; }
svg { display: block; flex: none; }
u { text-underline-offset: 2px; }

.titlebar {
  display: flex;
  align-items: center;
  height: 25px;
  padding: 0 2px 0 3px;
  background: linear-gradient(90deg, #0a246a, #a6caf0);
  color: #fff;
}
.titlebar h1 { flex: 1; margin: 0 0 0 3px; font-size: 15px; font-weight: 400; white-space: nowrap; }
.winbtns { display: flex; margin-left: auto; }
.winbtns button, .raised {
  display: flex;
  align-items: center;
  justify-content: center;
  background: #d4d0c8;
  border: 1px solid;
  border-color: #fff #404040 #404040 #fff;
  box-shadow: inset -1px -1px #808080;
}
.winbtns button { width: 20px; height: 19px; }
.winbtns .close { margin-left: 4px; }

.menubar { display: flex; align-items: center; height: 28px; padding: 0 2px; border-bottom: 1px solid #808080; }
.menubar > button { padding: 0 4px 0 5px; white-space: nowrap; }
.doc-icon { margin-left: 2px; }
.grip { width: 3px; height: 22px; flex: none; border: 1px solid; border-color: #fff #808080 #808080 #fff; }

.dock { display: flex; height: 28px; }
.toolbar {
  display: flex;
  align-items: center;
  padding: 0 1px;
  border: 1px solid;
  border-color: #fff #808080 #808080 #fff;
}
.toolbar .grip { margin-right: 1px; }
.stub { width: 32px; }
.ic { width: 23px; height: 22px; flex: none; display: flex; align-items: center; justify-content: center; }
.sep { width: 2px; height: 24px; margin: 0 2px; flex: none; border-left: 1px solid #808080; border-right: 1px solid #fff; }
.dd { width: 11px; height: 22px; flex: none; display: flex; align-items: center; justify-content: center; }
.dd::after { content: ""; border: 3px solid transparent; border-top-color: #000; border-bottom: 0; }
.dd.off::after { border-top-color: #808080; }
.dd.more { align-items: flex-end; }
.tx { height: 24px; padding: 0 2px; white-space: nowrap; }
.menu { padding: 0 3px 0 6px; }
.on {
  border: 1px solid;
  border-color: #808080 #fff #fff #808080;
  background: repeating-conic-gradient(#fff 0 25%, #d4d0c8 0 50%) 0 0 / 2px 2px;
}
.ser { font-family: "Liberation Serif", serif; font-size: 15px; }
.fx { font-family: "Liberation Serif", serif; font-weight: 700; font-size: 15px; }
.fx small { font-size: 11px; font-style: italic; }

.combo { display: flex; height: 22px; background: #fff; }
.combo select { flex: 1; min-width: 0; appearance: none; padding-left: 2px; outline: 0; }
.combo span { width: 14px; display: flex; align-items: center; justify-content: center; background: #d4d0c8; border: 1px solid #fff; }
.combo span::after { content: ""; border: 4px solid transparent; border-top: 5px solid #000; border-bottom: 0; }
.zoom { width: 68px; margin: 0 2px 0 1px; }
.font { width: 150px; margin: 0 5px 0 1px; }
.size { width: 44px; margin-right: 2px; }

.formulabar { display: flex; height: 22px; border-left: 1px solid #808080; }
.namebox { width: 122px; background: #fff; text-align: center; }
.formulabar .raised { width: 20px; }
.eq { width: 69px; padding-right: 5px; text-align: right; font-weight: 700; }
.formula { flex: 1; min-width: 0; background: #fff; }

.workbook { flex: 1; min-height: 0; display: flex; border-top: 1px solid #404040; }
.sheet { flex: 1; min-width: 0; position: relative; overflow: hidden; background: #fff; font: 11px/12px "Liberation Sans", Arial, sans-serif; }
table { width: 100%; table-layout: fixed; border-collapse: separate; border-spacing: 0; }
.w28 { width: 28px; } .w62 { width: 62px; } .w65 { width: 65px; } .w67 { width: 67px; }
.w74 { width: 74px; } .w79 { width: 79px; } .w185 { width: 185px; }
td, th { padding: 0; white-space: nowrap; }
th {
  background: #d4d0c8;
  border-right: 1px solid #808080;
  border-bottom: 1px solid #808080;
  font: 13px/12px "DejaVu Sans Condensed", "Noto Sans", sans-serif;
  box-shadow: inset 1px 1px #fff;
}
thead th { height: 17px; }
th:first-child { border-left: 2px solid #606060; }
th.cur { font-weight: 700; }
td { border-right: 1px solid #c0c0c0; border-bottom: 1px solid #c0c0c0; padding: 0 1px; vertical-align: bottom; }
td.n { text-align: right; padding-right: 2px; }
td.c { text-align: center; }
.h14 { height: 14px; } .h15 { height: 15px; } .h16 { height: 16px; } .h17 { height: 17px; }

td.title {
  background: #ff9;
  border: solid #000;
  border-width: 0 2px 2px 0;
  text-align: center;
  font-weight: 700;
  font-size: 14px;
}
.box td:nth-child(-n+6) { background: #ff9; border-color: #ff9; border-right-width: 0; }
.box td:nth-child(6) { border-right: 2px solid #000; border-bottom-width: 0; }
.box td:nth-child(-n+5).n { padding-right: 3px; }
.box.end td:nth-child(-n+6), .pre5 td:nth-child(-n+6), .pre3 td:nth-child(-n+4) { border-bottom: 2px solid #000; }
.box td:nth-child(n+2):nth-child(6) { border-right: 2px solid #000; }

.sum-top td:nth-child(n+8):nth-child(-n+10), .sum-end td:nth-child(n+8):nth-child(-n+10) { border-bottom: 2px solid #000; }
.sum td:nth-child(7), .sum td:nth-child(10) { border-right: 2px solid #000; }
.sum td:nth-child(8), .sum td:nth-child(9) { border-right-color: #000; }
.sum td:nth-child(n+8):nth-child(-n+10) { border-bottom-color: #000; }
td.kb { border-bottom: 2px solid #000; }
td.kr { border-right: 2px solid #000; }
td.result { background: #ff0; border: solid #000; border-width: 0 2px 2px 0; }

.g3 td:nth-child(-n+4), .g5 td:nth-child(-n+6) { background: #ff9; border-color: #000; }
.g3 td:nth-child(2), .g5 td:nth-child(2) { border-right-width: 0; }
.g3.split td:nth-child(2) { border-right-width: 1px; }
.g3 td:nth-child(4), .g5 td:nth-child(6), .g5.body td:nth-child(3) { border-right: 2px solid #000; }
.g3.thick td:nth-child(-n+4), .g5.thick td:nth-child(-n+6) { border-bottom-width: 2px; }

td.active { position: relative; }
td.active::before { content: ""; position: absolute; inset: -2px; border: 2px solid #000; }
td.active::after { content: ""; position: absolute; right: -3px; bottom: -3px; width: 6px; height: 6px; background: #000; border: solid #fff; border-width: 1px 0 0 1px; }

.chart { position: absolute; left: 519px; top: 186px; font: 11px "Liberation Sans", Arial, sans-serif; }
.ylab { text-anchor: end; }
.xlab { text-anchor: middle; }

.vscroll { width: 19px; margin-right: 2px; display: flex; flex-direction: column; }
.vscroll .raised { height: 18px; flex: none; }
.vscroll .splitbox { height: 6px; border-bottom: 2px solid #404040; border-top: 1px solid #fff; }
.thumb { background: #d4d0c8; border: 1px solid; border-color: #fff #404040 #404040 #fff; }
.track { background: repeating-conic-gradient(#202020 0 25%, #c8c4bc 0 50%) 0 0 / 2px 2px; }
.vscroll .thumb { flex: 16; }
.vscroll .track { flex: 1; }

.tabbar { display: flex; height: 20px; padding-left: 2px; border-bottom: 1px solid #fff; }
.tabbar .raised { width: 19px; flex: none; }
.tabs { flex: 1; min-width: 0; display: flex; overflow: hidden; border-bottom: 1px solid #404040; border-top: 1px solid #404040; }
.tabs button { flex: none; white-space: nowrap; line-height: 17px; }
.tabs .slash { margin-top: -1px; }
.t1 { width: 192px; } .t2 { width: 146px; } .t3 { width: 162px; }
.t4 { width: 97px; } .t5 { width: 64px; }
.act { background: #fff; font-weight: 700; }
.hscroll { width: 223px; flex: none; display: flex; }
.hscroll .splitbox { width: 4px; border-left: 1px solid #fff; border-right: 2px solid #404040; }
.hscroll .track { width: 12px; }
.hscroll .thumb { flex: 1; }
.hscroll .raised + .splitbox { margin-right: 20px; }

.draw { border-bottom: 1px solid #808080; margin-top: 1px; }
.status { display: flex; align-items: center; gap: 3px; height: 28px; padding: 0 4px 0 8px; font-size: 16px; border-bottom: 1px solid #fff; }
.status p { flex: 1; margin: 0; white-space: nowrap; height: 24px; line-height: 24px; border-right: 1px solid #fff; margin-right: 5px; }
.pane { height: 21px; flex: none; line-height: 20px; text-align: center; border: 1px solid; border-color: #808080 #fff #fff #808080; }
.p1 { width: 34px; } .p2 { width: 167px; } .p3 { width: 39px; } .p4 { width: 43px; } .p5 { width: 29px; }
```
